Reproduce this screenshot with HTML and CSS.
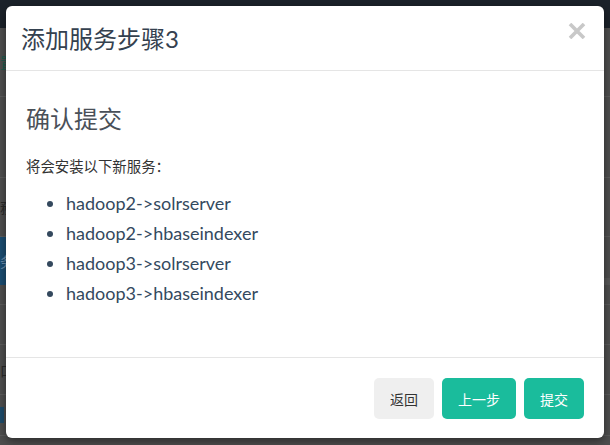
FILE: index.html
```html
<!DOCTYPE html>
<html lang="zh">
<head>
<meta charset="utf-8">
<title>添加服务步骤3</title>
<link rel="stylesheet" href="styles.css">
</head>
<body>
<div class="page">
  <div class="navbar"></div>
  <div class="content">
    <div class="row row-a"><span class="bg-text teal">置</span></div>
    <div class="row row-b"></div>
    <div class="row row-c"><span class="bg-text">務</span></div>
    <div class="row row-d"><span class="bg-btn">务</span><span class="bg-panel"></span></div>
    <div class="row row-e"></div>
    <div class="row row-f"></div>
    <div class="row row-g"><span class="bg-text">口</span></div>
    <div class="row row-h"><span class="bg-chip"></span></div>
  </div>
</div>
<div class="modal">
  <div class="modal-header">
    <h4 class="modal-title">添加服务步骤3</h4>
    <button class="close" type="button" aria-label="关闭">
      <svg width="18" height="16" viewBox="0 0 18 16"><path d="M2 1 L16 15 M16 1 L2 15" stroke="#c8c8c8" stroke-width="3.6" stroke-linecap="butt"/></svg>
    </button>
  </div>
  <div class="modal-body">
    <h3 class="heading">确认提交</h3>
    <p class="intro">将会安装以下新服务：</p>
    <ul class="services">
      <li>hadoop2-&gt;solrserver</li>
      <li>hadoop2-&gt;hbaseindexer</li>
      <li>hadoop3-&gt;solrserver</li>
      <li>hadoop3-&gt;hbaseindexer</li>
    </ul>
  </div>
  <div class="modal-footer">
    <button class="btn btn-default" type="button">返回</button>
    <button class="btn btn-primary" type="button">上一步</button>
    <button class="btn btn-primary" type="button">提交</button>
  </div>
</div>
</body>
</html>
```

FILE: styles.css
```css
html, body {
  margin: 0;
  padding: 0;
}
body {
  width: 610px;
  height: 445px;
  overflow: hidden;
  background: #4e4e4e;
  font-family: Lato, "Noto Sans CJK SC", sans-serif;
  position: relative;
}
.page {
  display: flex;
  flex-direction: column;
  height: 100%;
}
.navbar {
  height: 28px;
  background: #1b222a;
  flex: none;
}
.content {
  display: flex;
  flex-direction: column;
}
.row {
  border-bottom: 1px solid #5c5c5c;
  display: flex;
  align-items: center;
}
.row-a { height: 68px; }
.row-b { height: 80px; }
.row-c { height: 58px; }
.row-d { height: 48px; border-bottom: none; align-items: stretch; justify-content: space-between; }
.row-e { height: 19px; }
.row-f { height: 39px; }
.row-g { height: 49px; }
.row-h { height: 40px; }
.bg-text {
  font-size: 14px;
  color: #2a2a2a;
}
.bg-text.teal { color: #1b5c4d; }
.bg-btn {
  font-size: 14px;
  color: #6a8fae;
  background: #1b4d72;
  width: 60px;
  display: flex;
  align-items: center;
}
.bg-panel {
  width: 60px;
  margin-top: 41px;
  background: #585858;
}
.bg-chip {
  width: 4px;
  height: 16px;
  background: #1d4b6a;
}

.modal {
  position: absolute;
  left: 6px;
  top: 6px;
  width: 598px;
  background: #fff;
  border-radius: 6px;
  box-shadow: 0 3px 10px rgba(0, 0, 0, 0.45);
  display: flex;
  flex-direction: column;
}
.modal-header {
  display: flex;
  align-items: flex-start;
  justify-content: space-between;
  padding: 15px 18px 13px 15px;
  border-bottom: 1px solid #e5e5e5;
}
.modal-title {
  margin: 0;
  font-size: 24px;
  line-height: 36px;
  font-weight: normal;
  color: #34414f;
}
.close {
  border: 0;
  background: none;
  padding: 0;
  margin-top: 2px;
  cursor: pointer;
  display: flex;
}
.modal-body {
  padding: 15px 20px 15px 20px;
}
.heading {
  margin: 20px 0 0;
  font-size: 24px;
  line-height: 26px;
  font-weight: normal;
  color: #4a5058;
}
.intro {
  margin: 25px 0 0;
  font-size: 14.4px;
  line-height: 20px;
  color: #333;
}
.services {
  margin: 11px 0 34px;
  padding-left: 40px;
  font-size: 18px;
  line-height: 30px;
  color: #34495e;
}
.modal-footer {
  display: flex;
  justify-content: flex-end;
  gap: 8px;
  padding: 20px 20px 19px;
  border-top: 1px solid #e5e5e5;
}
.btn {
  height: 41px;
  padding: 0 16px;
  border: 0;
  border-radius: 5px;
  font-family: Lato, "Noto Sans CJK SC", sans-serif;
  font-size: 14px;
  cursor: pointer;
}
.btn-default {
  background: #efefef;
  color: #333;
}
.btn-primary {
  background: #1abc9c;
  color: #fff;
}
```
